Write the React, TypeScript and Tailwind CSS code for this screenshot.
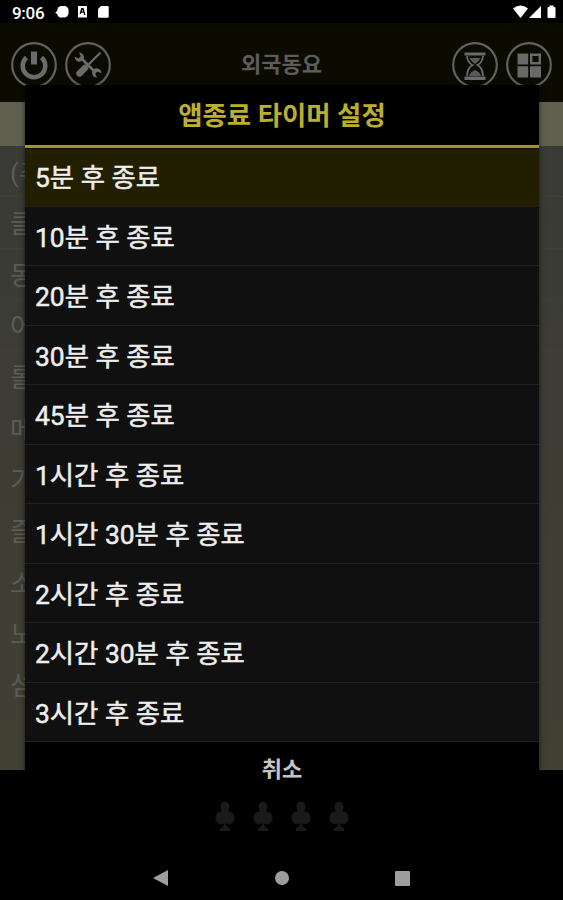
import React from 'react';

const timers = [
  '5분 후 종료',
  '10분 후 종료',
  '20분 후 종료',
  '30분 후 종료',
  '45분 후 종료',
  '1시간 후 종료',
  '1시간 30분 후 종료',
  '2시간 후 종료',
  '2시간 30분 후 종료',
  '3시간 후 종료',
];

const songs = ['(추', '클', '동', '어', '롤', '메', '기', '즐', '소', '노', '섬'];

const StatusBar = () => (
  <div className="flex h-[23px] items-center bg-black pl-3 pr-[7px] text-white">
    <span className="w-[34px] text-[17px] leading-none font-medium tracking-[-0.3px] pt-[3px]">9:06</span>
    <svg className="ml-[9px]" width="54" height="23" viewBox="0 0 54 23" fill="currentColor">
      <path d="M3 7.500 5.500 6h5l2 1.500 1 1.500v5l-1.500 2.500-2 1H5l-2-1.200-.8-2L.3 12.500l1.700-1.500z" />
      <path fillRule="evenodd" d="M23 6h9v11.500h-9zM26.300 8l-1.800 6h1.200l.5-1.300h2.500L29 15h1.500l-2-7zm.5 3.500.6-1.900.7 1.900z" />
      <path d="M46 6h6.500q1.200 0 1.200 1.200v9.300q0 1.200-1.200 1.200h-8.300q-1.200 0-1.200-1.200V9z" />
    </svg>
    <svg className="ml-auto" width="44" height="23" viewBox="0 0 44 23" fill="currentColor">
      <path d="M1 8.500Q8.500 2.500 16 8.500L8.500 18z" />
      <path d="M29 6v12H17z" />
      <path d="M37.500 5.500h4V7h1.200q.8 0 .8.800v9.400q0 .8-.8.800h-6.400q-.8 0-.8-.8V7.800q0-.8.800-.8h1.200z" />
    </svg>
  </div>
);

const RoundIcon = ({ children }: { children: React.ReactNode }) => (
  <svg width="46" height="46" viewBox="0 0 46 46" fill="none">
    <circle cx="23" cy="23" r="21.800" stroke="#616161" strokeWidth="2.200" />
    {children}
  </svg>
);

const TopBar = () => (
  <div className="flex h-[79px] items-start justify-between bg-[#0b0b00] px-[11px] pt-[19px]">
    <div className="flex gap-2">
      <RoundIcon>
        <path d="M15.500 15.500a11.300 11.300 0 1 0 15 0" stroke="#6b6b6b" strokeWidth="4.500" />
        <path d="M20 9.500h6v13h-6z" fill="#6b6b6b" />
      </RoundIcon>
      <RoundIcon>
        <path d="M17 17 30 30" stroke="#6b6b6b" strokeWidth="2.600" />
        <path d="M14 10.500a4.600 4.600 0 1 1-4.300 4.300l3.800 1.700 2.300-2.300z" fill="#6b6b6b" />
        <path d="M32 35.500a4.600 4.600 0 1 1 4.300-4.300l-3.800-1.700-2.300 2.300z" fill="#6b6b6b" />
        <path d="M34.800 11.200 23 23" stroke="#6b6b6b" strokeWidth="2.200" strokeLinecap="round" />
        <path d="M20 26 14.500 31.500" stroke="#6b6b6b" strokeWidth="6.500" strokeLinecap="round" />
      </RoundIcon>
    </div>
    <span className="mt-[9px] text-[22px] leading-7 font-bold text-[#5c5c5a]">외국동요</span>
    <div className="flex gap-2">
      <RoundIcon>
        <path d="M12.500 10.500h21v3h-21zM12.500 34.500h21v3.500h-21z" fill="#6b6b6b" />
        <path
          d="M15 14q.5 6.500 5.500 9-5 2.500-5.500 11M31 14q-.5 6.500-5.500 9 5 2.500 5.500 11"
          stroke="#6b6b6b"
          strokeWidth="1.800"
        />
        <path d="M17.500 16h11q-1 3-5.500 6-4.500-3-5.500-6zM17 34q1-4 6-6 5 2 6 6z" fill="#5a5a5a" />
      </RoundIcon>
      <RoundIcon>
        <path d="M11.500 11.500h10.700v11H11.500zM11.500 24.300h10.700v11.200H11.500zM24 24.300h11v11.200H24z" fill="#696969" />
        <path d="M25.200 12.700h8.600v8.600h-8.600z" stroke="#696969" strokeWidth="2.400" />
      </RoundIcon>
    </div>
  </div>
);

const Club = () => (
  <svg width="20" height="31" viewBox="0 0 20 31" fill="#1a1a1a">
    <path d="M10 .5c2.500 0 4.500 2.800 4.500 5.300 0 2-.7 3.400-1.700 4.700 4-.6 6.700 2.200 6.700 6 0 4-2.500 6.700-5.300 6.700-1.500 0-2.600-.5-3.400-1.300.2 3 1.500 4.300 4.200 5.600V30H5v-2.500c2.700-1.300 4-2.600 4.200-5.600-.8.800-1.900 1.300-3.400 1.300C3 23.200.5 20.500.5 16.500c0-3.800 2.700-6.600 6.700-6C6.200 9.200 5.500 7.800 5.500 5.800 5.500 3.300 7.500.5 10 .5z" />
  </svg>
);

const NavBar = () => (
  <div className="flex h-[44px] items-center justify-between bg-black pl-[153px] pr-[153px]">
    <svg width="15" height="16" viewBox="0 0 15 16" fill="#9e9e9e">
      <path d="M15 0v16L0 8z" />
    </svg>
    <div className="size-[14px] rounded-full bg-[#9e9e9e]" />
    <div className="size-[15px] rounded-[1px] bg-[#9e9e9e]" />
  </div>
);

const TimerDialog = () => (
  <div className="absolute left-[25px] top-[85px] w-[514px] bg-black shadow-[0_1px_5px_rgba(0,0,0,0.6)]">
    <h2 className="flex h-[60px] items-center justify-center pt-[3px] text-[26.400px] leading-none font-bold text-[#bcae2e]">
      앱종료 타이머 설정
    </h2>
    <div className="h-[3px] bg-[#a0952b]" />
    <ul>
      {timers.map((timer, index) => (
        <li
          key={timer}
          className={`flex items-center border-b border-[#202020] pl-[10px] text-[26.400px] leading-none text-[#eeeeee] [-webkit-text-stroke:0.500px_#eeeeee] ${
            index === 0 ? 'h-[58.500px] border-t border-t-[#0d0c00] bg-[#221e00] pt-[1px]' : 'h-[59.500px] bg-[#101010] pt-[4px]'
          }`}
        >
          {timer}
        </li>
      ))}
    </ul>
    <button className="block h-[53px] w-full pt-[2px] text-[22px] leading-none font-bold text-[#c4c4c4]">취소</button>
  </div>
);

const App = () => {
  return (
    <div className="relative flex h-[900px] w-[563px] flex-col overflow-hidden bg-black font-[Roboto,'Noto_Sans_CJK_KR',sans-serif]">
      <StatusBar />
      <TopBar />
      <div className="h-11 bg-[#606050]" />

      {/* song list behind the dialog */}
      <ul className="h-[624px] overflow-hidden bg-linear-to-b from-[#3a3a36] to-[#404033]">
        {songs.map((song) => (
          <li
            key={song}
            className="flex h-[51.300px] items-center border-b border-[#3f3f38] pl-[10px] pt-[4px] text-[26px] leading-none text-[#5c5c55]"
          >
            {song}
          </li>
        ))}
      </ul>

      <div className="flex flex-1 justify-center gap-[18px] pt-[31px]">
        <Club />
        <Club />
        <Club />
        <Club />
      </div>
      <NavBar />
      <TimerDialog />
    </div>
  );
};

export default App;
